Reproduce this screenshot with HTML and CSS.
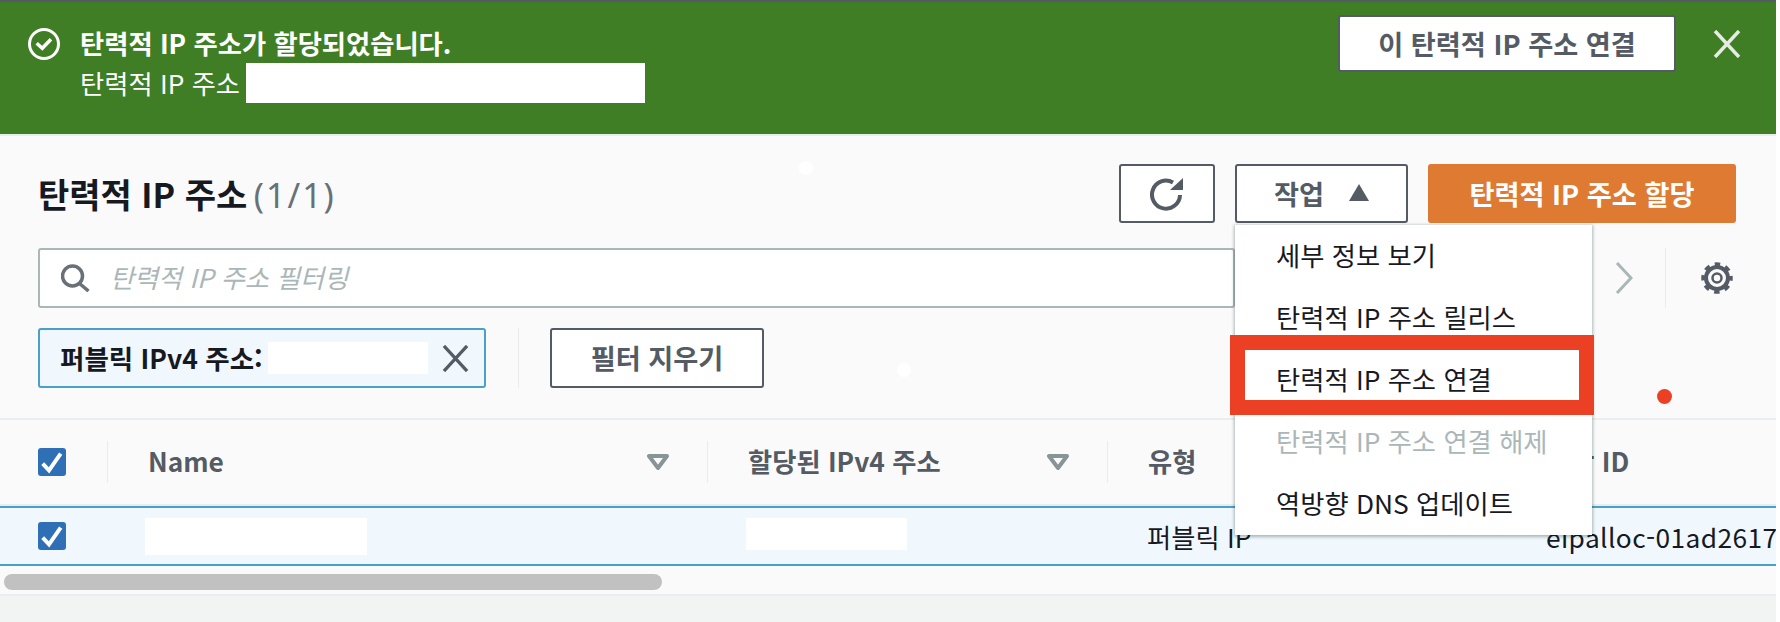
FILE: index.html
```html
<!DOCTYPE html>
<html lang="ko">

<head>
  <meta charset="UTF-8">
  <title>탄력적 IP 주소</title>
  <link rel="stylesheet" href="styles.css">
</head>

<body>
  <div class="page">
    <div class="flash">
      <svg class="flash-icon" viewBox="0 0 32 32" width="32" height="32" fill="none" stroke="#fff" stroke-width="3">
        <circle cx="16" cy="16" r="14.500"/>
        <path d="M8.700 15.300l5.600 5 8.700-9" stroke-width="3.500"/>
      </svg>
      <div class="flash-text">
        <div class="flash-title">탄력적 IP 주소가 할당되었습니다.</div>
        <div class="flash-sub">탄력적 IP 주소 <span class="mask flash-mask"></span></div>
      </div>
      <button class="btn flash-btn">이 탄력적 IP 주소 연결</button>
      <svg class="flash-close" viewBox="0 0 28 28" width="28" height="28" fill="none" stroke="#e6ebe3" stroke-width="3.500">
        <path d="M2 1l24 26M26 1L2 27"/>
      </svg>
    </div>

    <div class="panel">
      <div class="panel-head">
        <h1>탄력적 IP 주소 <span class="count">(1/1)</span></h1>
        <div class="actions">
          <button class="btn refresh-btn">
            <svg viewBox="0 0 34 34" width="34" height="34" fill="none" stroke="#545b64" stroke-width="4">
              <path d="M23 5.500A14 14 0 1 0 30 18"/>
              <path d="M33 1v12H20z" fill="#545b64" stroke="none"/>
            </svg>
          </button>
          <button class="btn action-btn">작업 <span class="caret"></span></button>
          <button class="btn primary-btn">탄력적 IP 주소 할당</button>
        </div>
      </div>

      <div class="filter-row">
        <div class="search">
          <svg viewBox="0 0 29 28" width="29" height="28" fill="none" stroke="#687078" stroke-width="3.500">
            <circle cx="11.500" cy="12" r="10"/>
            <path d="M18.500 19.500l9 7.500"/>
          </svg>
          <span>탄력적 IP 주소 필터링</span>
        </div>
        <svg class="pager" viewBox="0 0 18 32" width="18" height="32" fill="none" stroke="#aab7b8" stroke-width="3">
          <path d="M2 1l14 15L2 31"/>
        </svg>
        <div class="gear-wrap">
          <svg viewBox="0 0 32 32" width="32" height="32" fill="none" stroke="#545b64">
            <circle cx="16" cy="16" r="11" stroke-width="4"/>
            <circle cx="16" cy="16" r="14" stroke-width="3.500" stroke-dasharray="5.500 5.500" stroke-dashoffset="2.750"/>
            <circle cx="16" cy="16" r="4.500" stroke-width="2.500"/>
          </svg>
        </div>
      </div>

      <div class="chip-row">
        <div class="chip">
          <strong>퍼블릭 IPv4 주소:</strong>
          <span class="mask chip-mask"></span>
          <svg viewBox="0 0 28 28" width="27" height="27" fill="none" stroke="#545b64" stroke-width="3.500">
            <path d="M2 1l24 26M26 1L2 27"/>
          </svg>
        </div>
        <div class="chip-divider"></div>
        <button class="btn clear-btn">필터 지우기</button>
      </div>

      <div class="table">
        <div class="table-row table-head">
          <div class="cell cell-check">
            <svg class="check" viewBox="0 0 28 28" width="28" height="28"><path d="M4.700 15.700l6.300 6.600L22.700 5.700"/></svg>
          </div>
          <div class="cell cell-name">
            <span class="label">Name</span>
            <svg class="sort" viewBox="0 0 22 16" width="22" height="16"><path d="M2 2h18l-9 12z"/></svg>
          </div>
          <div class="cell cell-ip">
            <span class="label">할당된 IPv4 주소</span>
            <svg class="sort" viewBox="0 0 22 16" width="22" height="16"><path d="M2 2h18l-9 12z"/></svg>
          </div>
          <div class="cell cell-type"><span class="label">유형</span></div>
          <div class="cell cell-id"><span class="label">할당 ID</span></div>
        </div>
        <div class="table-row table-body">
          <div class="cell cell-check">
            <svg class="check" viewBox="0 0 28 28" width="28" height="28"><path d="M4.700 15.700l6.300 6.600L22.700 5.700"/></svg>
          </div>
          <div class="cell cell-name"><span class="mask name-mask"></span></div>
          <div class="cell cell-ip"><span class="mask ip-mask"></span></div>
          <div class="cell cell-type"><span>퍼블릭 IP</span></div>
          <div class="cell cell-id"><span class="alloc-id">eipalloc-01ad2617</span></div>
        </div>
      </div>

      <div class="scroll-track"><div class="scroll-thumb"></div></div>
    </div>
  </div>

  <ul class="menu">
    <li>세부 정보 보기</li>
    <li>탄력적 IP 주소 릴리스</li>
    <li>탄력적 IP 주소 연결</li>
    <li class="disabled">탄력적 IP 주소 연결 해제</li>
    <li>역방향 DNS 업데이트</li>
  </ul>
  <div class="highlight"></div>
  <span class="dot dot-a"></span>
  <span class="dot dot-b"></span>
  <span class="dot dot-c"></span>
</body>

</html>
```

FILE: styles.css
```css
html, body {
  margin: 0;
  height: 622px;
  overflow: hidden;
  background: #fff;
}

body {
  position: relative;
  font-family: "Noto Sans CJK KR", "Noto Sans", sans-serif;
  font-size: 26.3px;
  color: #16191f;
}

button {
  font-family: inherit;
}

.page {
  width: 1776px;
  height: 622px;
  background: #f2f3f3;
  border-top: 2px solid #545b64;
  box-sizing: border-box;
}

.mask {
  display: block;
  background: #fff;
}

/* flash bar */
.flash {
  display: flex;
  align-items: flex-start;
  height: 132px;
  background: #3f7e24;
  color: #fff;
  padding: 13px 35px 0 28px;
  box-sizing: border-box;
}

.flash-icon {
  margin-top: 13px;
  flex: none;
}

.flash-text {
  margin-left: 20px;
  flex: 1;
}

.flash-title {
  font-weight: 700;
  line-height: 34px;
  margin-top: 11px;
}

.flash-sub {
  display: flex;
  align-items: center;
  gap: 6px;
  line-height: 40px;
  margin-top: 3px;
}

.flash-mask {
  width: 399px;
  height: 40px;
}

.btn {
  box-sizing: border-box;
  background: #fff;
  border: 2px solid #545b64;
  border-radius: 3px;
  color: #545b64;
  font-size: 27.2px;
  font-weight: 700;
  padding: 0 0 2px;
}

.flash-btn {
  width: 338px;
  height: 57px;
  flex: none;
}

.flash-close {
  flex: none;
  margin: 15px 0 0 37px;
}

/* panel */
.panel {
  background: #fafafa;
  border-top: 2px solid #eaeded;
  padding-top: 28px;
}

.panel-head {
  display: flex;
  justify-content: space-between;
  align-items: center;
  height: 59px;
  padding: 0 40px 0 38px;
}

h1 {
  margin: 0;
  font-size: 34px;
  font-weight: 700;
}

.count {
  font-family: "Noto Sans", sans-serif;
  font-weight: 400;
  letter-spacing: 2px;
  margin-left: -3px;
  color: #687078;
}

.actions {
  display: flex;
  gap: 20px;
}

.actions .btn {
  height: 59px;
}

.refresh-btn {
  width: 96px;
  display: flex;
  align-items: center;
  justify-content: center;
  padding: 0;
}

.action-btn {
  width: 173px;
  display: flex;
  align-items: center;
  justify-content: center;
  gap: 25px;
}

.caret {
  width: 0;
  height: 0;
  border-left: 10px solid transparent;
  border-right: 10px solid transparent;
  border-bottom: 17px solid #545b64;
}

.actions .primary-btn {
  width: 308px;
  background: #df7a33;
  border-color: #df7a33;
  color: #fff;
}

.filter-row {
  display: flex;
  align-items: center;
  height: 60px;
  margin-top: 25px;
  padding-left: 38px;
}

.search {
  display: flex;
  align-items: center;
  gap: 20px;
  width: 1197px;
  height: 60px;
  flex: none;
  box-sizing: border-box;
  padding-left: 21px;
  background: #fff;
  border: 2px solid #aab7b8;
  border-radius: 3px;
  color: #aab7b8;
  font-style: italic;
  font-size: 26.1px;
}

.search span {
  padding-bottom: 2px;
}

.pager {
  flex: none;
  margin-left: 380px;
}

.gear-wrap {
  display: flex;
  align-items: center;
  justify-content: center;
  flex: none;
  box-sizing: border-box;
  width: 102px;
  height: 60px;
  margin-left: 32px;
  border-left: 1px solid #eaeded;
}

.chip-row {
  display: flex;
  align-items: center;
  height: 60px;
  margin-top: 20px;
  padding-left: 38px;
}

.chip {
  display: flex;
  align-items: center;
  box-sizing: border-box;
  width: 448px;
  height: 60px;
  padding: 0 15px 0 20px;
  background: #f1f8fd;
  border: 2px solid #4a9fcb;
  border-radius: 3px;
  font-size: 26.5px;
}

.chip strong {
  white-space: nowrap;
  padding-bottom: 2px;
}

.chip-mask {
  flex: none;
  width: 160px;
  height: 32px;
  margin: 0 14px 0 auto;
}

.chip svg {
  flex: none;
}

.chip-divider {
  width: 1px;
  height: 60px;
  margin: 0 31px 0 32px;
  background: #eaeded;
}

.clear-btn {
  width: 214px;
  height: 60px;
}

/* table */
.table {
  margin-top: 30px;
  border-top: 2px solid #eaeded;
}

.table-row {
  display: grid;
  grid-template-columns: 107px 600px 400px 439px 230px;
  align-items: center;
}

.table-head {
  height: 84px;
  font-weight: 700;
  color: #545b64;
  border-bottom: 2px solid #eaeded;
}

.table-body {
  height: 60px;
  box-sizing: border-box;
  background: #f1f8fd;
  border-top: 2px solid #4a9fcb;
  border-bottom: 2px solid #4a9fcb;
}

.cell {
  display: flex;
  align-items: center;
  justify-content: space-between;
  box-sizing: border-box;
  padding: 0 38px 0 40px;
  white-space: nowrap;
  overflow: hidden;
}

.table-head .cell:not(.cell-check):not(.cell-id) {
  height: 42px;
  border-left: 1px solid #eaeded;
}

.label {
  padding-bottom: 4px;
}

.table-body .cell {
  color: #16191f;
  font-weight: 400;
}

.cell-check {
  padding: 0 0 0 38px;
}

.cell-id {
  padding: 0;
}

.alloc-id {
  letter-spacing: 0.4px;
}

.check {
  display: block;
  flex: none;
  background: #2f6fb6;
  border-radius: 3px;
  fill: none;
  stroke: #fff;
  stroke-width: 4;
}

.sort {
  flex: none;
  fill: none;
  stroke: #879596;
  stroke-width: 4;
  stroke-linejoin: round;
}

.name-mask {
  width: 222px;
  height: 37px;
  margin-left: -2px;
}

.ip-mask {
  width: 161px;
  height: 32px;
  margin: 0 0 5px -1px;
}

.scroll-track {
  height: 30px;
  padding-top: 8px;
  padding-left: 4px;
  box-sizing: border-box;
  border-bottom: 2px solid #eaeded;
}

.scroll-thumb {
  width: 658px;
  height: 16px;
  border-radius: 8px;
  background: #c1c1c1;
}

/* dropdown, over the table */
.menu {
  position: absolute;
  left: 1235px;
  top: 225px;
  width: 357px;
  height: 310px;
  margin: 0;
  padding: 0;
  list-style: none;
  background: #fff;
  box-shadow: 0 1px 3px 1px rgba(0, 28, 36, 0.3);
  display: grid;
  grid-template-rows: repeat(5, 62px);
}

.menu li {
  display: flex;
  align-items: center;
  padding: 0 0 4px 41px;
}

.menu .disabled {
  color: #aab7b8;
}

.highlight {
  position: absolute;
  left: 1230px;
  top: 335px;
  width: 364px;
  height: 80px;
  box-sizing: border-box;
  border: 15px solid #ec4024;
}

.dot {
  position: absolute;
  width: 14px;
  height: 14px;
  border-radius: 50%;
  background: #fff;
}

.dot-a {
  left: 799px;
  top: 161px;
}

.dot-b {
  left: 897px;
  top: 363px;
}

.dot-c {
  left: 1657px;
  top: 389px;
  width: 15px;
  height: 15px;
  background: #ec4024;
}
```
